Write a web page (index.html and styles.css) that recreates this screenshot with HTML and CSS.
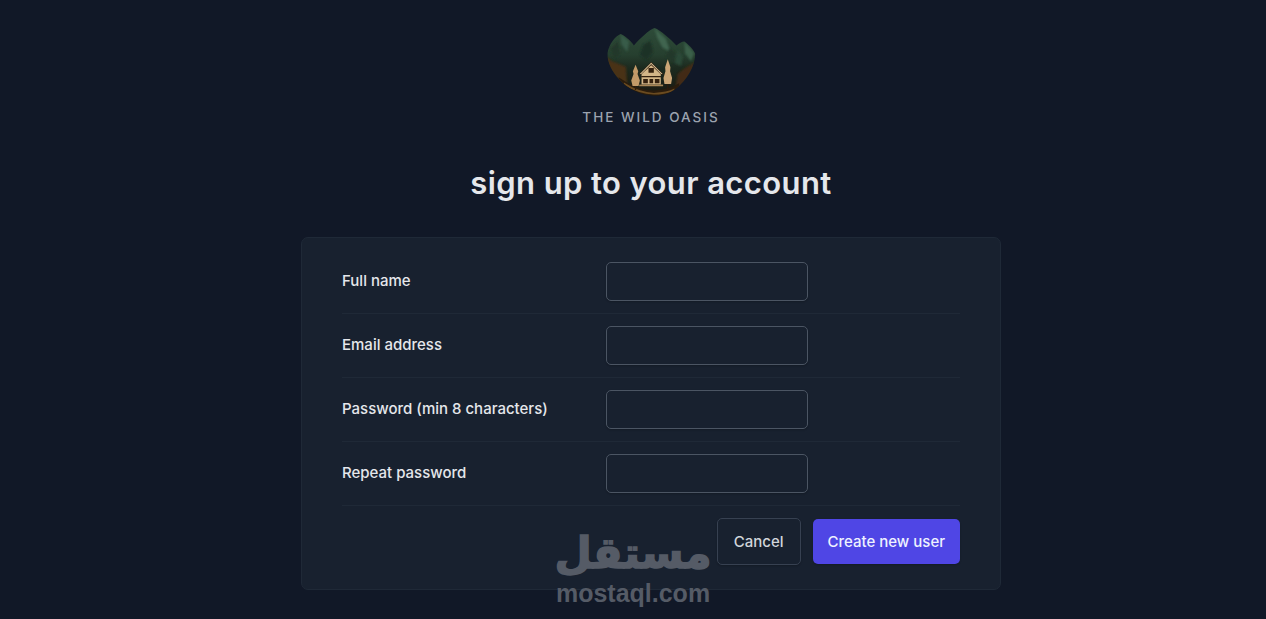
FILE: index.html
```html
<!DOCTYPE html>
<html lang="en">
<head>
	<title>The Wild Oasis - sign up</title>
	<meta charset="utf-8">
	<meta name="viewport" content="width=device-width, initial-scale=1">
	<link rel="stylesheet" href="styles.css">
</head>
<body>
	<main class="page">
		<div class="logo">
			<svg class="logo-art" viewBox="3 3 280 216" width="93" height="72" aria-hidden="true">
				<defs>
					<clipPath id="bowl">
						<path d="M10 88 C16 60 32 38 50 30 C62 34 80 50 90 64 C108 44 135 18 152 12 C170 18 200 46 218 64 C226 58 234 52 242 52 C255 62 270 76 275 90 C274 125 250 170 215 195 C195 210 170 216 148 215 C110 213 72 195 45 165 C25 145 10 115 10 88 Z"/>
					</clipPath>
					<linearGradient id="hill" x1="0" y1="0" x2="0" y2="1">
						<stop offset="0" stop-color="#2f4e3b"/>
						<stop offset="0.42" stop-color="#263f2f"/>
						<stop offset="0.6" stop-color="#1c2a1f"/>
						<stop offset="1" stop-color="#1a1810"/>
					</linearGradient>
					<filter id="soft" x="-10%" y="-10%" width="120%" height="120%">
						<feGaussianBlur stdDeviation="3"/>
					</filter>
				</defs>
				<g clip-path="url(#bowl)">
					<rect x="0" y="0" width="280" height="220" fill="url(#hill)"/>
					<g filter="url(#soft)">
						<path d="M152 12 L186 44 L200 84 L176 70 L160 40 Z" fill="#3f6550"/>
						<path d="M242 52 L272 86 L262 112 L244 88 Z" fill="#3a5e49"/>
						<path d="M50 30 L76 52 L70 84 L52 60 Z" fill="#395c48"/>
						<path d="M118 62 L140 50 L148 84 L128 108 L108 92 Z" fill="#1f3327"/>
						<path d="M20 74 L42 52 L48 92 L30 104 Z" fill="#223829"/>
						<path d="M196 72 L216 88 L206 116 L186 100 Z" fill="#22392b"/>
						<path d="M222 78 L238 96 L232 126 L212 116 Z" fill="#2c4937"/>
						<path d="M0 92 L24 112 L66 128 L70 190 L0 190 Z" fill="#4a3116"/>
						<path d="M280 112 L244 132 L222 150 L214 200 L280 200 Z" fill="#432c13"/>
					</g>
					<path d="M44 160 Q100 200 150 200 Q195 198 226 178 L226 220 H44 Z" fill="#2a1c0d"/>
					<path d="M60 176 Q105 205 150 207 Q190 205 212 194 L212 201 Q180 212 150 212 Q105 210 60 184 Z" fill="#6b4b20"/>
				</g>
				<path d="M95 122 L103 142 L101 150 L108 170 L104 186 L86 186 L82 170 L89 150 L87 142 Z" fill="#c29a68"/>
				<path d="M192 106 L200 130 L199 142 L205 162 L202 180 L182 180 L179 162 L185 142 L184 130 Z" fill="#cca676"/>
				<path d="M93 186 H97 V198 H93 Z M190 180 H194 V198 H190 Z" fill="#2d1d0d"/>
				<path d="M113 148 L142 120 L171 148 V182 H113 Z" fill="#d2b587"/>
				<path d="M104 152 L142 114 L180 152 L172 152 L142 124 L112 152 Z" fill="#3b2613"/>
				<path d="M108 150 L142 116 L176 150 L172 150 L142 120 L112 150 Z" fill="#e0c99f"/>
				<path d="M134 132 H150 V146 H134 Z M112 156 H172 V160 H112 Z M118 165 H132 V178 H118 Z M137 165 H148 V178 H137 Z M153 165 H167 V178 H153 Z" fill="#33210f"/>
				<path d="M106 182 H178 V187 H106 Z" fill="#a88657"/>
			</svg>
			<span class="logo-name">THE WILD OASIS</span>
		</div>

		<h1 class="title">sign up to your account</h1>

		<form class="form">
			<div class="row">
				<label class="label" for="name">Full name</label>
				<input class="input" type="text" id="name">
			</div>
			<div class="row">
				<label class="label" for="email">Email address</label>
				<input class="input" type="email" id="email">
			</div>
			<div class="row">
				<label class="label" for="password">Password (min 8 characters)</label>
				<input class="input" type="password" id="password">
			</div>
			<div class="row">
				<label class="label" for="repeat">Repeat password</label>
				<input class="input" type="password" id="repeat">
			</div>
			<div class="row row-actions">
				<button class="btn btn-cancel" type="reset">Cancel</button>
				<button class="btn btn-primary" type="submit">Create new user</button>
			</div>
		</form>
	</main>

	<div class="watermark">
		<span class="watermark-ar" lang="ar" dir="rtl">مستقل</span>
		<span class="watermark-en">mostaql.com</span>
	</div>
</body>
</html>
```

FILE: styles.css
```css
* {
	box-sizing: border-box;
}

html, body {
	margin: 0;
	height: 100%;
	overflow: hidden;
	background-color: #111827;
	color: #e5e7eb;
	font-family: "Inter", "Liberation Sans", sans-serif;
}

.page {
	display: flex;
	flex-direction: column;
	align-items: center;
	padding: 25px 0 0 36px;
}

.logo {
	display: flex;
	flex-direction: column;
	align-items: center;
}

.logo-art {
	display: block;
}

.logo-name {
	margin-top: 11px;
	font-family: "Inter", sans-serif;
	font-size: 13.5px;
	font-weight: 500;
	letter-spacing: 2px;
	line-height: 18px;
	color: #9ca3af;
}

.title {
	margin: 36px 0 33px;
	font-size: 31px;
	font-weight: 600;
	letter-spacing: 0.4px;
	line-height: 42px;
	color: #e5e7eb;
}

.form {
	width: 700px;
	padding: 24px 40px;
	border: 1px solid #1f2937;
	border-radius: 7px;
	background-color: #18212f;
}

.row {
	display: flex;
	align-items: center;
	gap: 24px;
	padding: 12px 0;
	border-bottom: 1px solid #1f2937;
}

.row:first-child {
	padding-top: 0;
}

.row-actions {
	justify-content: flex-end;
	gap: 12px;
	padding-bottom: 0;
	border-bottom: none;
}

.label {
	width: 240px;
	padding-bottom: 2px;
	font-size: 15px;
	font-weight: 500;
}

.input {
	width: 202px;
	height: 39px;
	border: 1px solid #4b5563;
	border-radius: 5px;
	background-color: #18212f;
	color: #e5e7eb;
	box-shadow: 0 1px 2px rgba(0, 0, 0, 0.2);
}

.btn {
	height: 47px;
	padding: 0 16px;
	border-radius: 5px;
	font-family: inherit;
	font-size: 15px;
	font-weight: 500;
	box-shadow: 0 1px 2px rgba(0, 0, 0, 0.2);
}

.btn-cancel {
	border: 1px solid #374151;
	background-color: #18212f;
	color: #d1d5db;
}

.btn-primary {
	height: 45px;
	padding: 0 15px;
	border: none;
	background-color: #4f46e5;
	color: #eef2ff;
}

/* sits over the bottom of the form */
.watermark {
	position: absolute;
	left: 556px;
	top: 528px;
	width: 154px;
	display: flex;
	flex-direction: column;
	align-items: center;
	color: #555b66;
	pointer-events: none;
}

.watermark-ar {
	font-family: "DejaVu Sans", sans-serif;
	font-size: 43px;
	font-weight: 700;
	line-height: 50px;
	-webkit-text-stroke: 1.5px #555b66;
}

.watermark-en {
	margin-top: 1px;
	font-family: "Liberation Sans", sans-serif;
	font-size: 25px;
	font-weight: 700;
}
```
